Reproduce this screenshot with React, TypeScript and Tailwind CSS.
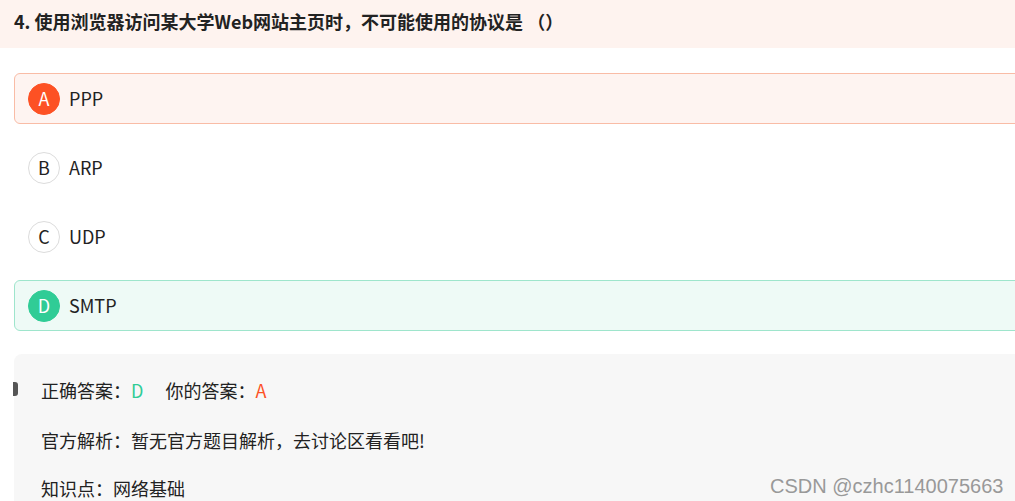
import React from 'react';

const font = { fontFamily: '"Microsoft YaHei", "Noto Sans CJK SC", "Noto Sans", sans-serif' };

type Opt = { key: string; text: string; state: 'wrong' | 'right' | 'none' };

const options: Opt[] = [
  { key: 'A', text: 'PPP', state: 'wrong' },
  { key: 'B', text: 'ARP', state: 'none' },
  { key: 'C', text: 'UDP', state: 'none' },
  { key: 'D', text: 'SMTP', state: 'right' },
];

function OptionRow({ opt }: { opt: Opt }) {
  const box =
    opt.state === 'wrong'
      ? 'border-[#f9bca6] bg-[#fef4f1]'
      : opt.state === 'right'
        ? 'border-[#9ee5cc] bg-[#eefaf6]'
        : 'border-transparent bg-white';
  const circle =
    opt.state === 'wrong'
      ? 'bg-[#fd5124] text-white border-[#fd5124]'
      : opt.state === 'right'
        ? 'bg-[#30cc96] text-white border-[#30cc96]'
        : 'bg-white text-[#222] border-[#dcdcdc]';
  return (
    <div className={`flex h-[51px] items-center rounded-[6px] border pl-[13px] ${box}`}>
      <div className={`flex h-[32px] w-[32px] items-center justify-center rounded-full border text-[18px] ${circle}`}>
        {opt.key}
      </div>
      <span className="ml-[9px] text-[18px] text-[#222]">{opt.text}</span>
    </div>
  );
}

export default function App() {
  return (
    <div className="relative h-[501px] w-[1015px] overflow-hidden bg-white" style={font}>
      <div className="flex h-[48px] items-center bg-[#fef3ef] pb-[5px] pl-[14px]">
        <h2 className="text-[18px] font-bold text-[#222]">4. 使用浏览器访问某大学Web网站主页时，不可能使用的协议是 （）</h2>
      </div>

      <div className="-mr-[10px] ml-[14px] mt-[25px] flex flex-col gap-[18px]">
        {options.map((o) => (
          <OptionRow key={o.key} opt={o} />
        ))}
      </div>

      <div className="relative -mr-[10px] ml-[14px] mt-[23px] h-[200px] rounded-[8px] bg-[#f7f7f7] pl-[27px] pt-[22px] text-[18px] text-[#222]">
        <div className="absolute -left-[1px] top-[28px] h-[14px] w-[5px] rounded-r-[3px] bg-[#555]" />
        <div className="flex h-[28px] items-center">
          <span>正确答案：</span>
          <span className="text-[#30cc96]">D</span>
          <span className="ml-[22px]">你的答案：</span>
          <span className="text-[#fd5124]">A</span>
        </div>
        <div className="mt-[22px] flex h-[28px] items-center">官方解析：暂无官方题目解析，去讨论区看看吧!</div>
        <div className="mt-[20px] flex h-[28px] items-center">知识点：网络基础</div>
      </div>

      <div
        className="absolute left-[770px] top-[471px] text-[20px] text-[#999]"
        style={{ fontFamily: '"Liberation Sans", Arial, sans-serif' }}
      >
        CSDN @czhc1140075663
      </div>
    </div>
  );
}
